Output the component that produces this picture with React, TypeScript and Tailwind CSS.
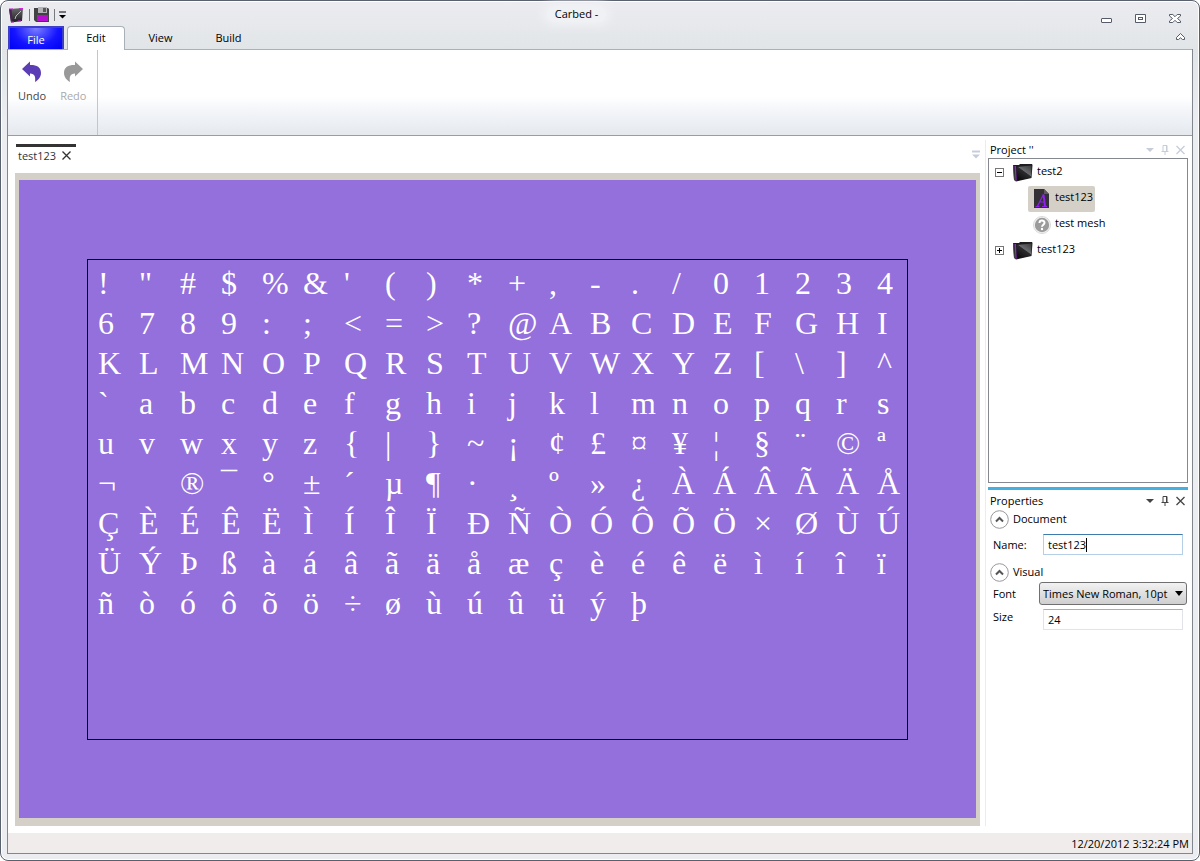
import { useState } from 'react';

const glyphRows: string[] = [
  '!"#$%&\'()*+,-./01234',
  '6789:;<=>?@ABCDEFGHI',
  'KLMNOPQRSTUVWXYZ[\\]^',
  '`abcdefghijklmnopqrs',
  'uvwxyz{|}~¡¢£¤¥¦§¨©ª',
  '¬ ®¯°±´µ¶·¸º»¿ÀÁÂÃÄÅ',
  'ÇÈÉÊËÌÍÎÏÐÑÒÓÔÕÖ×ØÙÚ',
  'ÜÝÞßàáâãäåæçèéêëìíîï',
  'ñòóôõö÷øùúûüýþ',
];

function AppIcon() {
  return (
    <svg width="16" height="16" viewBox="0 0 16 16" aria-hidden="true">
      <defs>
        <linearGradient id="app-face" x1="0" y1="0" x2="0" y2="1">
          <stop offset="0" stopColor="#6a6a6d" />
          <stop offset="1" stopColor="#1c1c1e" />
        </linearGradient>
      </defs>
      <path d="M0 2 L14 1 L13 14 L2 15.500 Z" fill="url(#app-face)" />
      <path d="M6 12 L7 9 L12 4" fill="none" stroke="#bcbcc0" strokeWidth="1" />
      <path d="M0 2 L2 15 L3.500 14.500 L2.500 2 Z" fill="#4b2158" />
      <path d="M0 2 H4 M10 1.500 H14 M2 15 H5 M9 14 H12" stroke="#d31fe0" strokeWidth="1" />
    </svg>
  );
}

function SaveIcon() {
  return (
    <svg width="16" height="16" viewBox="0 0 16 16" aria-hidden="true">
      <path d="M0 1 H14 L15 2 V15 H2 L0 13 Z" fill="#434345" />
      <rect x="4" y="0" width="9" height="6" fill="#b3b3b5" />
      <rect x="9" y="1" width="3" height="4" fill="#59595b" />
      <rect x="3" y="8" width="11" height="6" fill="#b70fd0" />
      <rect x="3" y="14" width="11" height="1" fill="#6d1580" />
    </svg>
  );
}

function ArrowIcon({ redo = false }: { redo?: boolean }) {
  const fill = redo ? '#999999' : '#5b3db5';
  return (
    <svg width="20" height="21" viewBox="0 0 20 21" aria-hidden="true">
      <g transform={redo ? 'translate(20 0) scale(-1 1)' : undefined}>
        <path d="M0 8 L8 0.500 V4 C14.500 3.800 19 6 19 12 C19 16 16.500 19 13 21 C13.800 16.500 13 12.500 8 12.500 V15.500 Z" fill={fill} />
      </g>
    </svg>
  );
}

function FolderIcon() {
  return (
    <svg width="20" height="18" viewBox="0 0 20 18" className="shrink-0" aria-hidden="true">
      <defs>
        <linearGradient id="folder-face" x1="1" y1="0" x2="0.300" y2="1">
          <stop offset="0" stopColor="#39393b" />
          <stop offset="0.480" stopColor="#6a6b6e" />
          <stop offset="0.520" stopColor="#2c2c2e" />
          <stop offset="1" stopColor="#0f0f10" />
        </linearGradient>
      </defs>
      <path d="M0 1 L6 1 L7 0 L19 0 L19.500 1 L18.500 14 L3 17.500 L1 16 Z" fill="#1d1d1f" />
      <path d="M4 3 L18.500 1.500 L18 13.500 L4.500 16.500 Z" fill="url(#folder-face)" />
      <path d="M1.500 2 L3 2 L3.500 16.500 L2.500 17 Z" fill="#a020e0" />
      <path d="M0.500 1.500 L1.500 16" stroke="#444" strokeWidth="1" />
    </svg>
  );
}

function FontFileIcon() {
  return (
    <svg width="16" height="20" viewBox="0 0 16 20" className="shrink-0" aria-hidden="true">
      <path d="M0 0 H10 L15 5 V19 H0 Z" fill="#343136" />
      <path d="M10 0 L15 5 H10 Z" fill="#5d5a60" />
      <path d="M1.500 17.500 H5.500 M8 17.500 H13 M3.500 17 L9.500 5.500 M5.500 13 H11" stroke="#8d22ea" strokeWidth="1.200" fill="none" />
      <path d="M9.500 5.500 L11 17.500" stroke="#8d22ea" strokeWidth="2" />
    </svg>
  );
}

function UnknownIcon() {
  return (
    <svg width="18" height="18" viewBox="0 0 18 18" className="shrink-0" aria-hidden="true">
      <circle cx="9" cy="9" r="8.500" fill="#f4f4f4" stroke="#d8d8d8" strokeWidth="1" />
      <circle cx="9" cy="9" r="7.200" fill="#9b9b9b" />
      <path d="M6.500 7 C6.500 3.800 11.500 3.900 11.500 6.800 C11.500 8.700 9 8.800 9 10.800" fill="none" stroke="#fff" strokeWidth="2" />
      <circle cx="9" cy="13" r="1.200" fill="#fff" />
    </svg>
  );
}

function PanelHeader({ title, tone }: { title: string; tone: string }) {
  return (
    <div className="flex h-4 items-center justify-between pr-[3px] pl-0.5">
      <h2>{title}</h2>
      <div className={`flex items-center gap-[7px] ${tone}`}>
        <button aria-label="Panel options">
          <svg width="8" height="10" viewBox="0 0 8 10"><path d="M0 3 H8 L4 7 Z" fill="currentColor" /></svg>
        </button>
        <button aria-label="Pin panel">
          <svg width="8" height="10" viewBox="0 0 8 10"><path d="M2 6 V0.500 H6 V6 M5.500 0.500 V6 M0.500 6.500 H7.500 M4 7 V10" fill="none" stroke="currentColor" /></svg>
        </button>
        <button aria-label="Close panel">
          <svg width="9" height="10" viewBox="0 0 9 10"><path d="M0.500 1 L8.500 9 M8.500 1 L0.500 9" stroke="currentColor" strokeWidth="1.300" /></svg>
        </button>
      </div>
    </div>
  );
}

function Expander({ open, label, onClick }: { open: boolean; label: string; onClick: () => void }) {
  return (
    <button className="shrink-0 pb-0.5" aria-label={label} aria-expanded={open} onClick={onClick}>
      <svg width="9" height="9" viewBox="0 0 9 9">
        <rect x="0.500" y="0.500" width="8" height="8" fill="#fff" stroke="#777" />
        <path d={open ? 'M2 4.500 H7' : 'M2 4.500 H7 M4.500 2 V7'} stroke="#000" />
      </svg>
    </button>
  );
}

function SectionToggle({ title, open, onClick }: { title: string; open: boolean; onClick: () => void }) {
  return (
    <button className="flex h-5 items-center gap-1 px-0.5" aria-expanded={open} onClick={onClick}>
      <svg width="19" height="19" viewBox="0 0 19 19">
        <circle cx="9.500" cy="9.500" r="8.800" fill="#fff" stroke="#999" />
        <path d={open ? 'M6 11.500 L9.500 8 L13 11.500' : 'M6 8 L9.500 11.500 L13 8'} fill="none" stroke="#555" strokeWidth="2" />
      </svg>
      {title}
    </button>
  );
}

function TitleBar() {
  return (
    <div className="flex h-[25px] pr-3 pl-0.5">
      <div className="flex items-center gap-1 pt-0.5">
        <AppIcon />
        <span className="h-3 w-px bg-[#77797d]" />
        <button aria-label="Save"><SaveIcon /></button>
        <span className="h-3 w-px bg-[#77797d]" />
        <button aria-label="Customize toolbar">
          <svg width="7" height="8" viewBox="0 0 7 8"><path d="M0 1 H7" stroke="#000" /><path d="M0 4 H7 L3.500 7.500 Z" fill="#000" /></svg>
        </button>
      </div>
      <div className="flex flex-1 items-center justify-center">
        <h1 className="rounded-full bg-[#f0f1f4] px-2 shadow-[0_0_8px_4px_#f0f1f4]">Carbed -</h1>
      </div>
      <div className="flex items-end justify-end gap-[23px] pb-px pl-[14px]">
        <button aria-label="Minimize">
          <svg width="11" height="12" viewBox="0 0 11 12"><rect x="0.500" y="5.500" width="10" height="4" rx="0.500" fill="#fff" stroke="#565b69" /></svg>
        </button>
        <button aria-label="Restore">
          <svg width="11" height="12" viewBox="0 0 11 12"><path d="M0.500 1.500 H10.500 V9.500 H0.500 Z" fill="#fff" stroke="#565b69" /><rect x="3.500" y="4.500" width="4" height="2" fill="#fff" stroke="#565b69" /></svg>
        </button>
        <button aria-label="Close">
          <svg width="12" height="12" viewBox="0 0 12 12"><path d="M0.500 1.500 H3.800 L6 3.700 L8.200 1.500 H11.500 V3 L8.500 5.500 L11.500 8 V9.500 H8.200 L6 7.300 L3.800 9.500 H0.500 V8 L3.500 5.500 L0.500 3 Z" fill="#fff" stroke="#565b69" /></svg>
        </button>
      </div>
    </div>
  );
}

function RibbonTabs() {
  return (
    <nav className="flex h-[23px] items-end pl-px">
      <button className="h-[23px] w-14 border-2 border-b-0 border-[#3d3fc4] bg-[radial-gradient(ellipse_at_top,#7d80ff_0%,#1414ff_60%,#0000f5_100%)] pt-[3px] text-white">File</button>
      <button className="relative z-10 -mb-px ml-[3px] h-6 w-[58px] rounded-t-sm border border-b-0 border-[#aab0b8] bg-white pb-0.5">Edit</button>
      <button className="h-[23px] w-[71px]">View</button>
      <button className="h-[23px] w-[65px]">Build</button>
      <button className="mr-2 mb-2 ml-auto" aria-label="Collapse ribbon">
        <svg width="9" height="8" viewBox="0 0 9 8"><path d="M4.500 0.500 L8.500 4.500 V6.500 H6.500 L4.500 4.800 L2.500 6.500 H0.500 V4.500 Z" fill="#fff" stroke="#565b69" /></svg>
      </button>
    </nav>
  );
}

function Ribbon() {
  return (
    <div className="flex h-[87px] border-y border-t-[#aab0b8] border-b-[#999ca1] bg-[linear-gradient(#fff_0%,#fff_55%,#f4f6f9_70%,#e5e9ee_100%)]">
      <div className="flex items-start gap-[14px] border-r border-[#c3c6ca] pt-[11px] pr-[11px] pl-2.5">
        <button className="flex flex-col items-center gap-1.5 text-[#444]"><ArrowIcon />Undo</button>
        <button className="flex flex-col items-center gap-1.5 text-[#aaa]" disabled><ArrowIcon redo />Redo</button>
      </div>
    </div>
  );
}

function Editor() {
  return (
    <main className="flex min-w-0 flex-1 flex-col pt-2 pr-[5px] pl-[7px]">
      <div className="flex h-[29px] items-start justify-between">
        <div className="ml-px flex h-[18px] w-[60px] items-center justify-between border-t-3 border-[#333] px-0.5 pt-0.5 text-[#333]">
          <span>test123</span>
          <button className="mr-[3px]" aria-label="Close document">
            <svg width="9" height="9" viewBox="0 0 9 9"><path d="M0.500 0.500 L8.500 8.500 M8.500 0.500 L0.500 8.500" stroke="#333" strokeWidth="1.300" /></svg>
          </button>
        </div>
        <button className="mt-[6px]" aria-label="Document list">
          <svg width="8" height="9" viewBox="0 0 8 9"><path d="M0 1.500 H8" stroke="#c6ccd8" strokeWidth="2" /><path d="M0 4.500 H8 L4 8.500 Z" fill="#c6ccd8" /></svg>
        </button>
      </div>
      <div className="flex flex-1 items-center justify-center border-x-4 border-t-7 border-b-8 border-[#d4d0c8] bg-[#9370db]">
        <div className="h-[481px] w-[821px] border border-black pt-[3px] pl-2.5 font-['Liberation_Serif',serif] text-[32px] leading-10 text-white">
          {glyphRows.map((row) => (
            <div key={row} className="flex">
              {Array.from(row).map((glyph) => (
                <span key={glyph} className="h-10 w-[41px] shrink-0 last:w-7">{glyph}</span>
              ))}
            </div>
          ))}
        </div>
      </div>
    </main>
  );
}

function TreeLabel({ text }: { text: string }) {
  return <span className="pb-1">{text}</span>;
}

function ProjectPanel() {
  const [first, setFirst] = useState(true);
  const [second, setSecond] = useState(false);
  return (
    <section className="flex h-[343px] flex-col pt-0.5">
      <PanelHeader title="Project ''" tone="text-[#c6ccd8]" />
      <div className="flex-1 border border-[#85888f] pt-px pl-[6px]">
        <div className="flex h-[26px] items-center gap-[9px]">
          <Expander open={first} label="Toggle test2" onClick={() => setFirst(!first)} />
          <button className="flex items-center gap-1"><FolderIcon /><TreeLabel text="test2" /></button>
        </div>
        {first && (
          <div className="flex flex-col items-start pl-[33px]">
            <button className="flex h-[26px] items-center gap-[5px] rounded-xs bg-[#d4d0c8] pr-0.5 pl-1.5"><FontFileIcon /><TreeLabel text="test123" /></button>
            <button className="flex h-[26px] items-center gap-1 pl-[5px]"><UnknownIcon /><TreeLabel text="test mesh" /></button>
          </div>
        )}
        <div className="flex h-[26px] items-center gap-[9px]">
          <Expander open={second} label="Toggle test123" onClick={() => setSecond(!second)} />
          <button className="flex items-center gap-1"><FolderIcon /><TreeLabel text="test123" /></button>
        </div>
      </div>
    </section>
  );
}

function PropertiesPanel() {
  const [documentOpen, setDocumentOpen] = useState(true);
  const [visualOpen, setVisualOpen] = useState(true);
  return (
    <section className="mt-1 border-t-3 border-[#43b0e0] pt-[3px]">
      <PanelHeader title="Properties" tone="text-[#444]" />
      <SectionToggle title="Document" open={documentOpen} onClick={() => setDocumentOpen(!documentOpen)} />
      {documentOpen && (
        <div className="flex h-[31px] items-center px-[5px]">
          <label htmlFor="name" className="w-[50px]">Name:</label>
          <div className="relative min-w-0 flex-1">
            <input id="name" defaultValue="test123" className="block h-[21px] w-full border border-[#b5cfe7] border-t-[#3d7bad] bg-white px-1 outline-none" />
            <span className="absolute top-1 left-[43px] h-[14px] w-px bg-black" />
          </div>
        </div>
      )}
      <div className="pt-0.5">
        <SectionToggle title="Visual" open={visualOpen} onClick={() => setVisualOpen(!visualOpen)} />
      </div>
      {visualOpen && (
        <div>
          <div className="flex h-[23px] items-center pr-px pl-[5px]">
            <label htmlFor="font" className="w-[46px]">Font</label>
            <div className="relative min-w-0 flex-1">
              <select id="font" className="block h-[23px] w-full appearance-none rounded-[3px] border border-[#707070] bg-linear-to-b from-[#f2f2f2] to-[#cfcfcf] pr-4 pl-[3px]">
                <option>Times New Roman, 10pt</option>
              </select>
              <svg className="pointer-events-none absolute top-[9px] right-1" width="8" height="5" viewBox="0 0 8 5"><path d="M0 0 H8 L4 5 Z" fill="#000" /></svg>
            </div>
          </div>
          <div className="flex h-7 items-center px-[5px]">
            <label htmlFor="size" className="w-[50px] pb-1">Size</label>
            <input id="size" defaultValue="24" className="block h-[21px] min-w-0 flex-1 border border-[#e2e3ea] border-t-[#abadb3] bg-white px-1" />
          </div>
        </div>
      )}
    </section>
  );
}

export default function App() {
  return (
    <div className="bg-white font-['Open_Sans',sans-serif] text-[11px] leading-4 text-black">
      <div className="flex min-h-screen flex-col rounded-lg border border-[#59606e] bg-linear-to-b from-[#ececf0] from-0% via-[#e1e5e8] via-[49px] to-[#ebedf1] to-[120px] px-1.5 pb-1.5 shadow-[inset_0_0_0_1px_#fff]">
        <TitleBar />
        <RibbonTabs />
        <div className="flex flex-1 flex-col border border-t-0 border-[#81868f] bg-white">
          <Ribbon />
          <div className="flex flex-1">
            <Editor />
            <aside className="mt-1 w-[207px] shrink-0 border-l border-[#ececec] pr-1 pl-0.5">
              <ProjectPanel />
              <PropertiesPanel />
            </aside>
          </div>
          <footer className="mt-[7px] flex h-5 items-center justify-end bg-[#f0ecec] px-[3px] pt-0.5">
            <time>12/20/2012 3:32:24 PM</time>
          </footer>
        </div>
      </div>
    </div>
  );
}
